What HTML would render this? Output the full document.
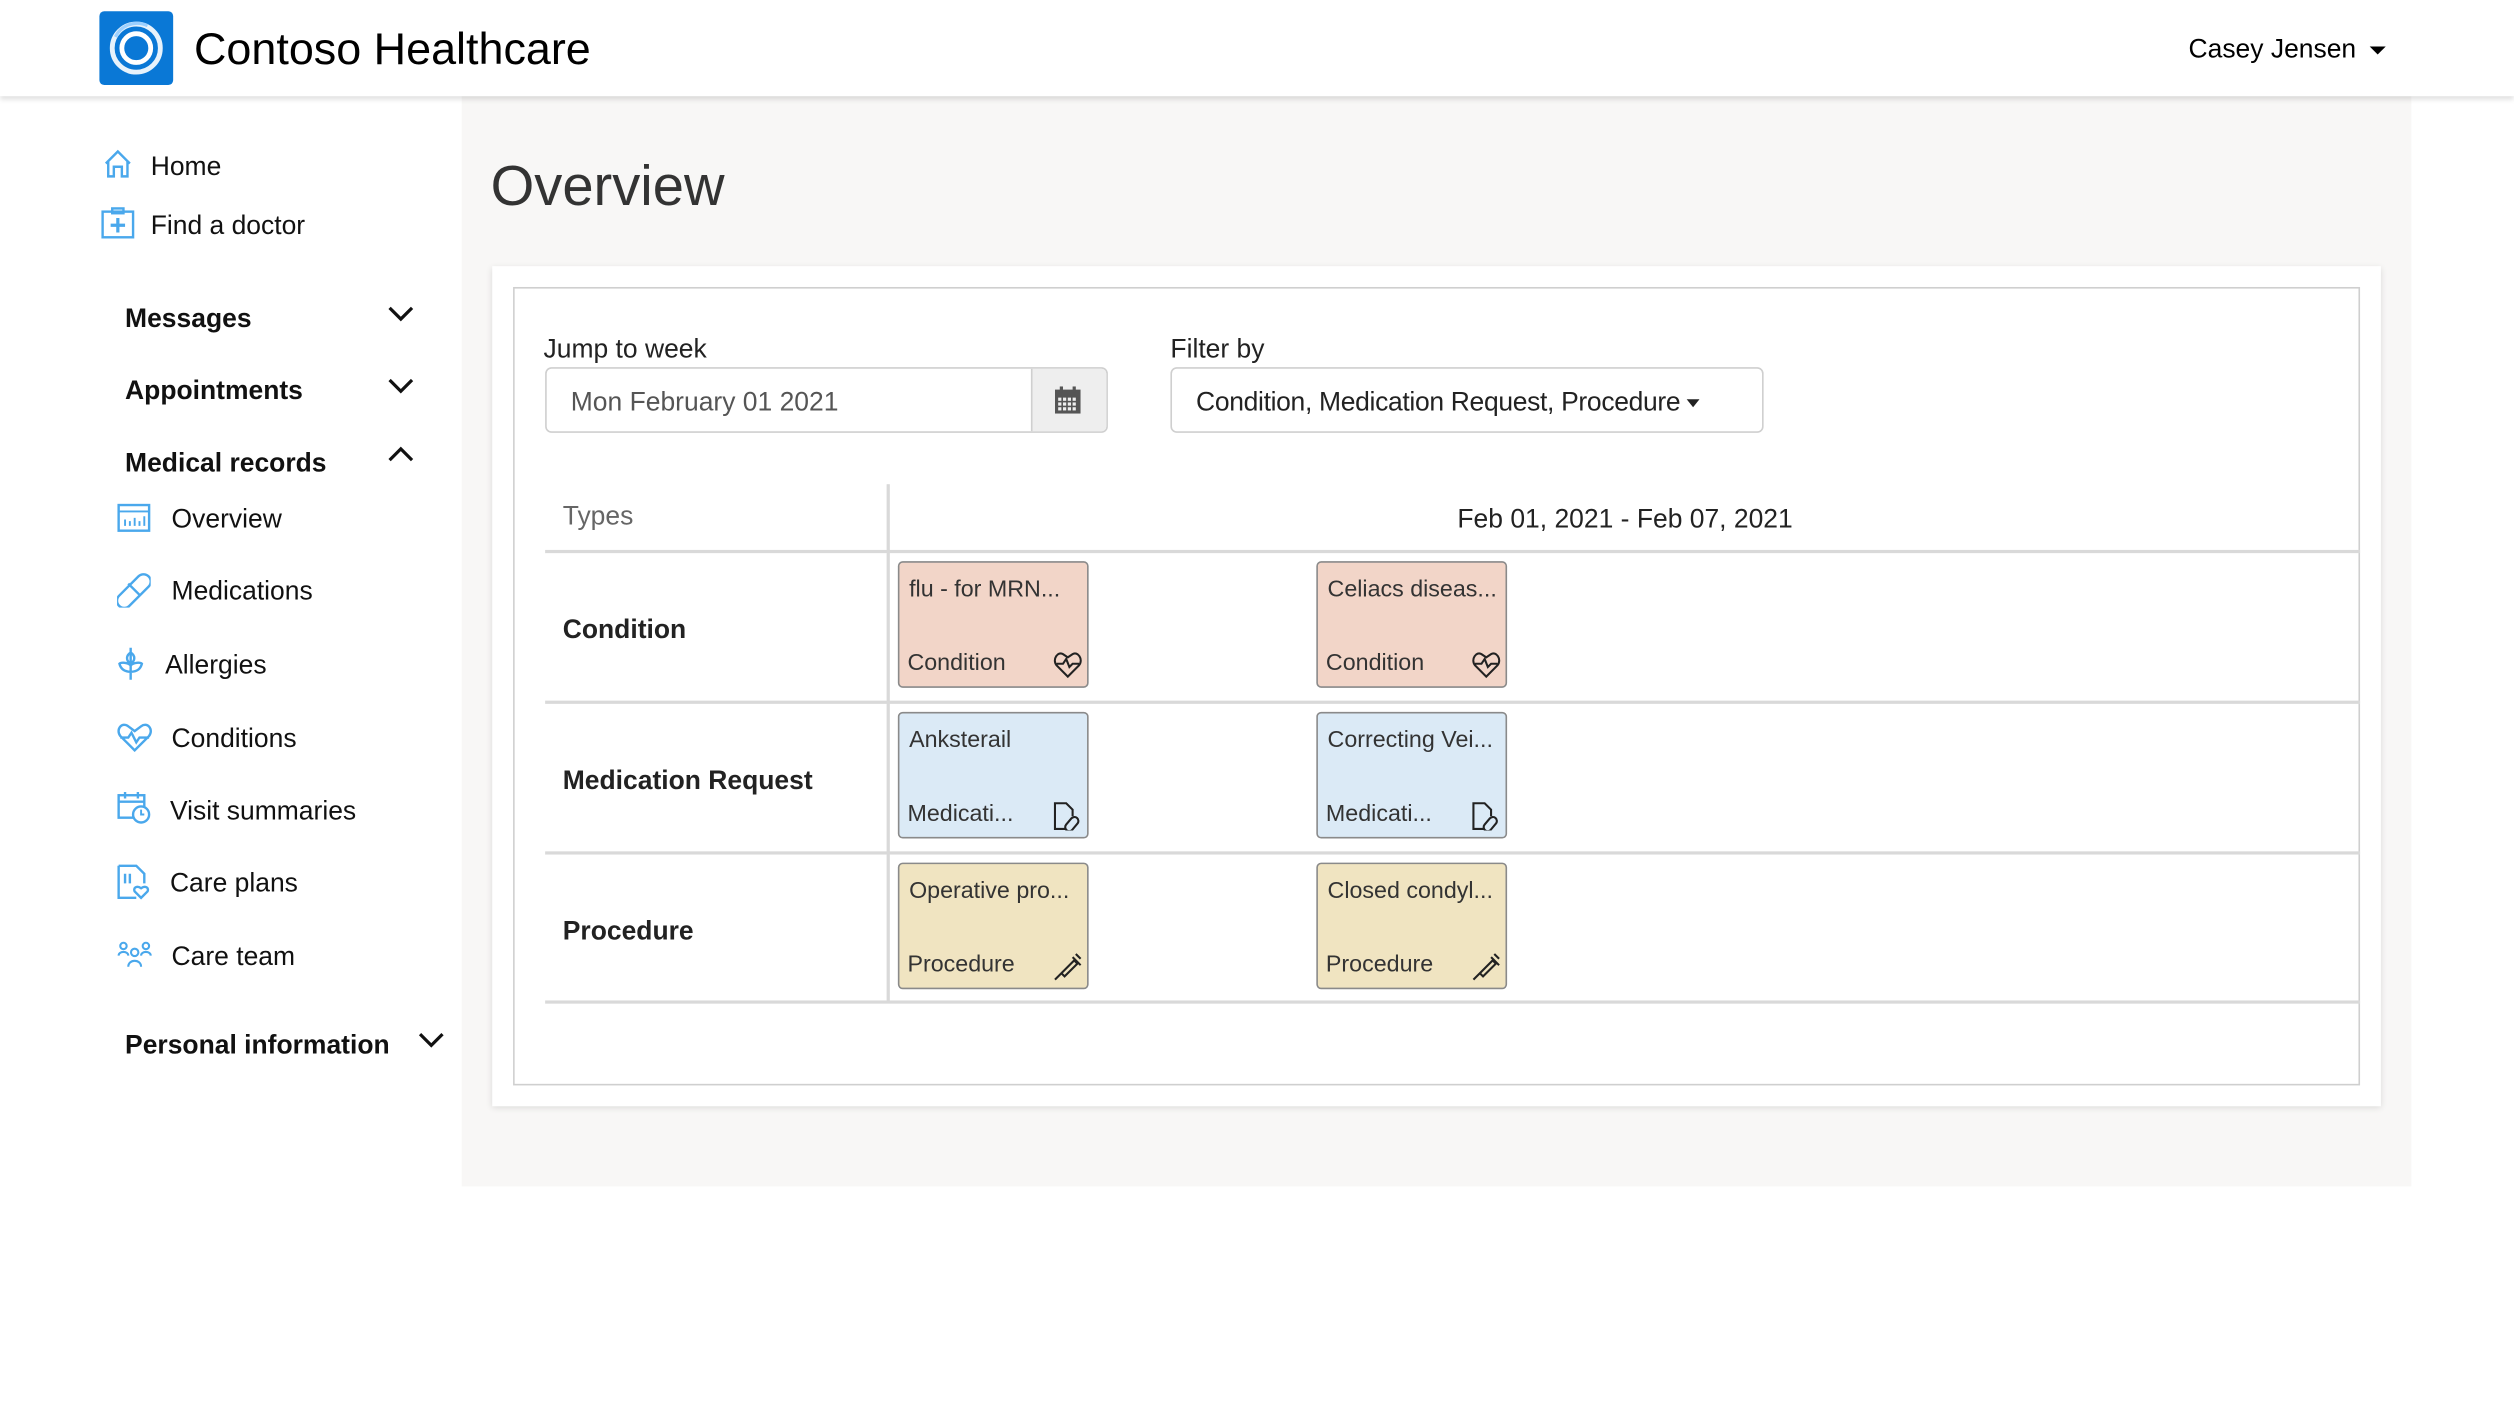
<!DOCTYPE html>
<html><head><meta charset="utf-8">
<style>
html,body{margin:0;padding:0;background:#fff;overflow:hidden;width:2514px;height:1418px}
#w{position:absolute;left:0;top:0;width:1568px;height:884px;transform:scale(1.6033);transform-origin:0 0;font-family:"Liberation Sans",sans-serif;color:#111}
.a{position:absolute;white-space:nowrap}
.nav{font-size:16.5px;line-height:20px}
.hd{font-size:16.5px;font-weight:bold;line-height:20px}
.chev{position:absolute;width:16px;height:10px}
.card{position:absolute;width:117px;height:77px;border:1.5px solid #8a8a8a;border-radius:3px;font-size:14.5px;color:#333}
.card .t{position:absolute;left:6px;top:9px}
.card .b{position:absolute;left:5px;top:55px}
.card svg{position:absolute;left:96px;top:55px}
.c{background:#f2d5c8}.m{background:#dbeaf6}.p{background:#f0e4c1}
.row{position:absolute;left:340px;width:1132px;height:2px;background:#d9d9d9}
.rl{position:absolute;left:351px;font-size:16.5px;font-weight:bold;color:#222}
</style></head><body><div id="w">
<div class="a" style="left:0;top:0;width:1568px;height:60px;background:#fff;box-shadow:0 2px 3px rgba(0,0,0,.12);z-index:2"></div>
<div class="a" style="left:62px;top:7px;width:46px;height:46px;background:#0a78d6;border-radius:3px;z-index:3">
<svg width="46" height="46" viewBox="0 0 46 46"><circle cx="23" cy="23" r="15" fill="none" stroke="#fff" stroke-width="3" opacity=".9"/><circle cx="23" cy="23" r="9" fill="none" stroke="#fff" stroke-width="3"/><path d="M10 16 A15 15 0 0 1 30 9" stroke="#9cd0ff" stroke-width="2" fill="none"/></svg></div>
<div class="a" style="left:121px;top:14px;font-size:28px;line-height:34px;z-index:3;color:#000">Contoso Healthcare</div>
<div class="a" style="left:1365px;top:21px;font-size:16.5px;line-height:20px;z-index:3;color:#000">Casey Jensen <span style="display:inline-block;width:0;height:0;border-left:5px solid transparent;border-right:5px solid transparent;border-top:5px solid #000;vertical-align:middle;margin-left:4px"></span></div>
<div class="a" style="left:288px;top:60px;width:1216px;height:680px;background:#f8f7f6"></div>
<svg class="a" style="left:64px;top:93px" width="19" height="18" viewBox="0 0 19 18"><path d="M2 9 L9.5 1.5 L17 9 M3.5 7.5 V17 H7 V11 H12 V17 H15.5 V7.5" fill="none" stroke="#4aa8ec" stroke-width="1.5"/></svg>
<div class="a nav" style="left:94px;top:94px">Home</div>
<svg class="a" style="left:63px;top:129px" width="21" height="20" viewBox="0 0 21 20"><rect x="1" y="3" width="19" height="16" fill="none" stroke="#4aa8ec" stroke-width="1.5"/><rect x="7" y="1" width="7" height="3" fill="none" stroke="#4aa8ec" stroke-width="1.5"/><path d="M10.5 7v9M6 11.5h9" stroke="#4aa8ec" stroke-width="2"/></svg>
<div class="a nav" style="left:94px;top:131px">Find a doctor</div>
<div class="a hd" style="left:78px;top:189px">Messages</div>
<svg class="chev" style="left:242px;top:191px" viewBox="0 0 16 10"><path d="M1 1 L8 8 L15 1" fill="none" stroke="#111" stroke-width="2"/></svg>
<div class="a hd" style="left:78px;top:234px">Appointments</div>
<svg class="chev" style="left:242px;top:236px" viewBox="0 0 16 10"><path d="M1 1 L8 8 L15 1" fill="none" stroke="#111" stroke-width="2"/></svg>
<div class="a hd" style="left:78px;top:279px">Medical records</div>
<svg class="chev" style="left:242px;top:278px" viewBox="0 0 16 10"><path d="M1 9 L8 2 L15 9" fill="none" stroke="#111" stroke-width="2"/></svg>
<svg class="a" style="left:73px;top:314px" width="21" height="18" viewBox="0 0 21 18"><rect x="1" y="1" width="19" height="16" fill="none" stroke="#4aa8ec" stroke-width="1.5"/><path d="M1 5h19M5 14v-4M8 14v-3M11 14v-5M14 14v-3M17 14v-6" stroke="#4aa8ec" stroke-width="1.2"/></svg>
<div class="a nav" style="left:107px;top:314px">Overview</div>
<svg class="a" style="left:73px;top:357px" width="21" height="22" viewBox="0 0 21 22"><rect x="-3" y="7" width="26" height="9" rx="4.5" transform="rotate(-45 10.5 11)" fill="none" stroke="#4aa8ec" stroke-width="1.5"/><path d="M7 7l7 7" stroke="#4aa8ec" stroke-width="1.5"/></svg>
<div class="a nav" style="left:107px;top:359px">Medications</div>
<svg class="a" style="left:73px;top:403px" width="17" height="22" viewBox="0 0 17 22"><path d="M8.5 1v20M8.5 4c-3 2-3 5 0 7 3-2 3-5 0-7M8.5 12c-2-2-6-2-7-1 1 4 4 5 7 5 3 0 6-1 7-5-1-1-5-1-7 1" fill="none" stroke="#4aa8ec" stroke-width="1.5"/></svg>
<div class="a nav" style="left:103px;top:405px">Allergies</div>
<svg class="a" style="left:73px;top:451px" width="22" height="18" viewBox="0 0 22 18"><path d="M11 17 L2 8 C-1 4 3-1 7 2 L11 5 L15 2 C19-1 23 4 20 8 Z M2 9 H7 L9 6 L12 12 L14 9 H20" fill="none" stroke="#4aa8ec" stroke-width="1.5"/></svg>
<div class="a nav" style="left:107px;top:451px">Conditions</div>
<svg class="a" style="left:73px;top:493px" width="21" height="21" viewBox="0 0 21 21"><rect x="1" y="3" width="16" height="14" fill="none" stroke="#4aa8ec" stroke-width="1.5"/><path d="M1 7h16M5 1v4M13 1v4" stroke="#4aa8ec" stroke-width="1.5"/><circle cx="15" cy="15" r="5" fill="#fff" stroke="#4aa8ec" stroke-width="1.5"/><path d="M15 12v3h2" stroke="#4aa8ec" stroke-width="1.2" fill="none"/></svg>
<div class="a nav" style="left:106px;top:496px">Visit summaries</div>
<svg class="a" style="left:73px;top:539px" width="21" height="22" viewBox="0 0 21 22"><path d="M1 1h11l5 5v6M1 1v20h11" fill="none" stroke="#4aa8ec" stroke-width="1.5"/><path d="M15 21l-4-4c-1-2 1-4 4-2 3-2 5 0 4 2z" fill="none" stroke="#4aa8ec" stroke-width="1.5"/><path d="M5 6v6M8 6v6" stroke="#4aa8ec" stroke-width="1.5"/></svg>
<div class="a nav" style="left:106px;top:541px">Care plans</div>
<svg class="a" style="left:73px;top:587px" width="22" height="17" viewBox="0 0 22 17"><circle cx="4" cy="3" r="2" fill="none" stroke="#4aa8ec" stroke-width="1.3"/><circle cx="18" cy="3" r="2" fill="none" stroke="#4aa8ec" stroke-width="1.3"/><circle cx="11" cy="7" r="2.3" fill="none" stroke="#4aa8ec" stroke-width="1.3"/><path d="M1 9c0-3 6-3 6 0M15 9c0-3 6-3 6 0M7 16c0-5 8-5 8 0" fill="none" stroke="#4aa8ec" stroke-width="1.3"/></svg>
<div class="a nav" style="left:107px;top:587px">Care team</div>
<div class="a hd" style="left:78px;top:642px">Personal information</div>
<svg class="chev" style="left:261px;top:644px" viewBox="0 0 16 10"><path d="M1 1 L8 8 L15 1" fill="none" stroke="#111" stroke-width="2"/></svg>
<div class="a" style="left:306px;top:96px;font-size:35px;line-height:42px;color:#333;font-weight:300">Overview</div>
<div class="a" style="left:307px;top:166px;width:1178px;height:524px;background:#fff;box-shadow:0 1px 4px rgba(0,0,0,.12)"></div>
<div class="a" style="left:320px;top:179px;width:1150px;height:496px;border:1.5px solid #cfcfcf"></div>
<div class="a" style="left:339px;top:208px;font-size:16.5px;line-height:20px;color:#222">Jump to week</div>
<div class="a" style="left:340px;top:229px;width:349px;height:39px;border:1.5px solid #cfcfcf;border-radius:4px;background:#fff;overflow:hidden">
 <div class="a" style="left:15px;top:12px;font-size:16.5px;color:#555">Mon February 01 2021</div>
 <div class="a" style="left:302px;top:0;width:47px;height:39px;background:#eeeeee;border-left:1.5px solid #cfcfcf"></div>
 <svg class="a" style="left:317px;top:11px" width="16" height="17" viewBox="0 0 16 17"><rect x="0" y="2" width="16" height="15" fill="#555"/><rect x="3" y="0" width="2" height="4" fill="#555"/><rect x="11" y="0" width="2" height="4" fill="#555"/><g fill="#eee"><rect x="2" y="7" width="2" height="2"/><rect x="5" y="7" width="2" height="2"/><rect x="8" y="7" width="2" height="2"/><rect x="11" y="7" width="2" height="2"/><rect x="2" y="10" width="2" height="2"/><rect x="5" y="10" width="2" height="2"/><rect x="8" y="10" width="2" height="2"/><rect x="11" y="10" width="2" height="2"/><rect x="2" y="13" width="2" height="2"/><rect x="5" y="13" width="2" height="2"/><rect x="8" y="13" width="2" height="2"/><rect x="11" y="13" width="2" height="2"/></g></svg>
</div>
<div class="a" style="left:730px;top:208px;font-size:16.5px;line-height:20px;color:#222">Filter by</div>
<div class="a" style="left:730px;top:229px;width:368px;height:39px;border:1.5px solid #cfcfcf;border-radius:4px;background:#fff">
 <div class="a" style="left:15px;top:12px;font-size:16.5px;color:#222;letter-spacing:-0.2px">Condition, Medication Request, Procedure <span style="display:inline-block;width:0;height:0;border-left:4.5px solid transparent;border-right:4.5px solid transparent;border-top:5px solid #222;vertical-align:middle"></span></div>
</div>
<div class="a" style="left:351px;top:313px;font-size:16.5px;color:#666">Types</div>
<div class="a" style="left:909px;top:315px;font-size:16.5px;color:#222">Feb 01, 2021 - Feb 07, 2021</div>
<div class="a" style="left:553px;top:302px;width:2px;height:323px;background:#d9d9d9"></div>
<div class="row" style="top:343px"></div>
<div class="row" style="top:437px"></div>
<div class="row" style="top:531px"></div>
<div class="row" style="top:624px"></div>
<div class="rl" style="top:384px">Condition</div>
<div class="rl" style="top:478px">Medication Request</div>
<div class="rl" style="top:572px">Procedure</div>
<div class="card c" style="left:560px;top:350px"><div class="t">flu - for MRN...</div><div class="b">Condition</div>
<svg width="18" height="17" viewBox="0 0 18 17"><path d="M9 16 L2 9 C-1 5 3 0 6 2 L9 4 L12 2 C15 0 19 5 16 9 Z M2 8 H6 L8 5 L10 10 L12 8 H16" fill="none" stroke="#222" stroke-width="1.3"/></svg></div>
<div class="card c" style="left:821px;top:350px"><div class="t">Celiacs diseas...</div><div class="b">Condition</div>
<svg width="18" height="17" viewBox="0 0 18 17"><path d="M9 16 L2 9 C-1 5 3 0 6 2 L9 4 L12 2 C15 0 19 5 16 9 Z M2 8 H6 L8 5 L10 10 L12 8 H16" fill="none" stroke="#222" stroke-width="1.3"/></svg></div>
<div class="card m" style="left:560px;top:444px"><div class="t">Anksterail</div><div class="b">Medicati...</div>
<svg width="18" height="18" viewBox="0 0 18 18"><path d="M8 17H1V1h7l4 4v4" fill="none" stroke="#222" stroke-width="1.3"/><rect x="9" y="9" width="5" height="10" rx="2.5" transform="rotate(40 11.5 14)" fill="none" stroke="#222" stroke-width="1.3"/></svg></div>
<div class="card m" style="left:821px;top:444px"><div class="t">Correcting Vei...</div><div class="b">Medicati...</div>
<svg width="18" height="18" viewBox="0 0 18 18"><path d="M8 17H1V1h7l4 4v4" fill="none" stroke="#222" stroke-width="1.3"/><rect x="9" y="9" width="5" height="10" rx="2.5" transform="rotate(40 11.5 14)" fill="none" stroke="#222" stroke-width="1.3"/></svg></div>
<div class="card p" style="left:560px;top:538px"><div class="t">Operative pro...</div><div class="b">Procedure</div>
<svg width="18" height="18" viewBox="0 0 18 18"><path d="M1 17l4-4M5 13l8-8 2 2-8 8zM12 3l5 5M14 1l3 3" fill="none" stroke="#222" stroke-width="1.3"/></svg></div>
<div class="card p" style="left:821px;top:538px"><div class="t">Closed condyl...</div><div class="b">Procedure</div>
<svg width="18" height="18" viewBox="0 0 18 18"><path d="M1 17l4-4M5 13l8-8 2 2-8 8zM12 3l5 5M14 1l3 3" fill="none" stroke="#222" stroke-width="1.3"/></svg></div>
</div></body></html>
